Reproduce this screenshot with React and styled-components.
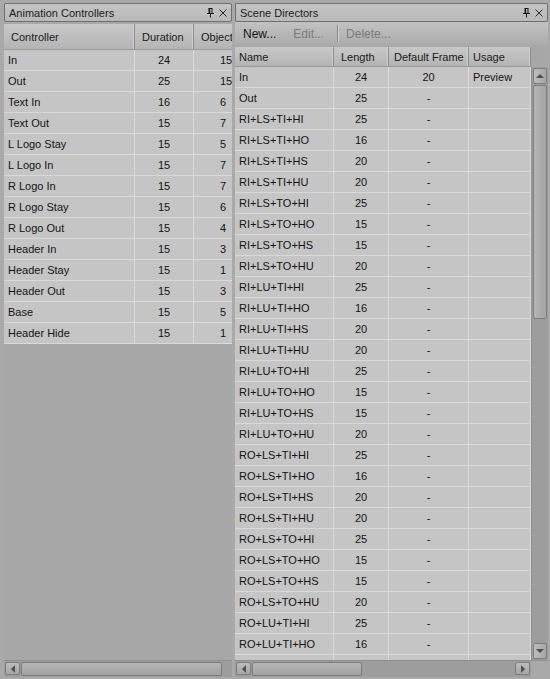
import React from 'react';
import styled, { createGlobalStyle } from 'styled-components';

const controllers = [
  ['In', 24, 15], ['Out', 25, 15], ['Text In', 16, 6], ['Text Out', 15, 7],
  ['L Logo Stay', 15, 5], ['L Logo In', 15, 7], ['R Logo In', 15, 7], ['R Logo Stay', 15, 6],
  ['R Logo Out', 15, 4], ['Header In', 15, 3], ['Header Stay', 15, 1], ['Header Out', 15, 3],
  ['Base', 15, 5], ['Header Hide', 15, 1],
];

const tiLengths = { HI: 25, HO: 16, HS: 20, HU: 20 };
const toLengths = { HI: 25, HO: 15, HS: 15, HU: 20 };

const directors = [['In', 24, '20', 'Preview'], ['Out', 25, '-', '']];
['RI', 'RO'].forEach((r) => {
  ['LS', 'LU'].forEach((l) => {
    ['TI', 'TO'].forEach((t) => {
      ['HI', 'HO', 'HS', 'HU'].forEach((h) => {
        const len = t === 'TI' ? tiLengths[h] : toLengths[h];
        directors.push([`${r}+${l}+${t}+${h}`, len, '-', '']);
      });
    });
  });
});

const GlobalStyle = createGlobalStyle`
  html, body { margin: 0; padding: 0; background: #a9a9a9; }
  body { font-family: "Liberation Sans", Arial, sans-serif; font-size: 11px; color: #151515; }
`;

const Screen = styled.div`
  width: 550px;
  height: 679px;
  box-sizing: border-box;
  padding: 3px 2px 2px 4px;
  display: flex;
  gap: 3px;
  overflow: hidden;
`;

const Panel = styled.div`
  width: ${(p) => p.$width}px;
  display: flex;
  flex-direction: column;
  min-height: 0;
`;

const TitleBar = styled.div`
  height: 17px;
  border: 1px solid #6f6f6f;
  border-radius: 2px;
  background: linear-gradient(#c4c4c4, #b9b9b9);
  display: flex;
  align-items: center;
  padding: 0 4px;
  color: #1c1c1c;
  flex-shrink: 0;
`;

const TitleText = styled.span`
  flex: 1;
`;

const TitleIcons = styled.div`
  display: flex;
  align-items: center;
  gap: 5px;
  color: #222;
`;

const Toolbar = styled.div`
  height: 23px;
  display: flex;
  align-items: center;
  background: linear-gradient(#c2c2c2, #acacac);
  padding: 0 7px;
  flex-shrink: 0;
`;

const ToolButton = styled.span`
  font-size: 12px;
  color: ${(p) => (p.$disabled ? '#7a7a7a' : '#151515')};
  padding: 0 ${(p) => p.$right ?? 8}px 0 ${(p) => p.$left ?? 8}px;
`;

const ToolSep = styled.span`
  width: 1px;
  height: 17px;
  background: #8a8a8a;
  box-shadow: 1px 0 0 #d0d0d0;
`;

const Body = styled.div`
  flex: 1;
  min-height: 0;
  display: flex;
  margin-top: 2px;
  background: #a7a7a7;
`;

const TableArea = styled.div`
  flex: 1;
  min-width: 0;
  overflow: hidden;
`;

const Grid = styled.div`
  display: grid;
  grid-template-columns: ${(p) => p.$cols};
  grid-template-rows: ${(p) => p.$head}px;
  grid-auto-rows: 21px;
`;

const HeadCell = styled.div`
  display: flex;
  align-items: center;
  padding-left: ${(p) => p.$pad}px;
  background: linear-gradient(#c8c8c8, #b4b4b4);
  border-right: 1px solid #8e8e8e;
  box-shadow: inset -1px 0 0 #cfcfcf;
  border-bottom: 1px solid #9a9a9a;
  white-space: nowrap;
  overflow: hidden;
  color: #1a1a1a;
`;

const Cell = styled.div`
  display: flex;
  align-items: center;
  justify-content: ${(p) => (p.$center ? 'center' : 'flex-start')};
  padding-left: ${(p) => p.$pad ?? (p.$center ? 0 : 4)}px;
  background: #c5c5c5;
  border-right: 1px solid #d9d9d9;
  border-bottom: 1px solid #d9d9d9;
  white-space: nowrap;
  overflow: hidden;
  color: #131313;
`;

const VScroll = styled.div`
  width: 16px;
  display: flex;
  flex-direction: column;
  margin-top: ${(p) => p.$top}px;
  background: #9d9d9d;
  border-left: 1px solid #8f8f8f;
  flex-shrink: 0;
`;

const HScroll = styled.div`
  height: 16px;
  display: flex;
  background: #9d9d9d;
  border-top: 1px solid #8f8f8f;
  flex-shrink: 0;
`;

const ArrowBtn = styled.div`
  width: ${(p) => (p.$v ? 14 : 15)}px;
  height: ${(p) => (p.$v ? 16 : 13)}px;
  margin: 1px;
  border: 1px solid #7c7c7c;
  border-radius: 2px;
  background: linear-gradient(${(p) => (p.$v ? '90deg, ' : '')}#bdbdbd, #a6a6a6);
  display: flex;
  align-items: center;
  justify-content: center;
  box-sizing: border-box;
  flex-shrink: 0;
`;

const Thumb = styled.div`
  border: 1px solid #7c7c7c;
  border-radius: 2px;
  box-sizing: border-box;
  background: linear-gradient(${(p) => (p.$v ? '90deg, ' : '')}#b6b6b6, #a2a2a2);
  ${(p) => (p.$v ? `height: ${p.$size}px; margin: 0 1px;` : `width: ${p.$size}px; margin: 1px 0;`)}
  flex-shrink: 0;
`;

const Track = styled.div`
  flex: 1;
`;

const Corner = styled.div`
  width: 17px;
  background: #a9a9a9;
`;

const Arrow = ({ dir }) => {
  const vertical = dir === 'up' || dir === 'down';
  const pts = {
    up: '1,6 5,2 9,6',
    down: '1,2 5,6 9,2',
    left: '6,1 2,5 6,9',
    right: '2,1 6,5 2,9',
  }[dir];
  const w = vertical ? 10 : 8;
  const h = vertical ? 8 : 10;
  return (
    <svg width={w} height={h} viewBox={`0 0 ${w} ${h}`}>
      <polygon points={pts} fill="#4e4e4e" />
    </svg>
  );
};

const PinIcon = () => (
  <svg width="7" height="10" viewBox="0 0 7 10">
    <path d="M1.5 0.5h4M2 0.5v5M5 0.5v5M0 5.5h7M3.5 5.5v4" stroke="#1a1a1a" strokeWidth="1" fill="none" />
    <rect x="2" y="1" width="1.2" height="4.5" fill="#1a1a1a" />
  </svg>
);

const CloseIcon = () => (
  <svg width="8" height="8" viewBox="0 0 8 8">
    <path d="M0.5 0.5l7 7M7.5 0.5l-7 7" stroke="#2a2a2a" strokeWidth="1" />
  </svg>
);

const Title = ({ children }) => (
  <TitleBar>
    <TitleText>{children}</TitleText>
    <TitleIcons>
      <PinIcon />
      <CloseIcon />
    </TitleIcons>
  </TitleBar>
);

export default function App() {
  return (
    <>
      <GlobalStyle />
      <Screen>
        <Panel $width={228}>
          <Title>Animation Controllers</Title>
          <Body>
            <TableArea>
              <Grid $cols="131px 59px 70px" $head={26}>
                <HeadCell $pad={7}>Controller</HeadCell>
                <HeadCell $pad={7}>Duration</HeadCell>
                <HeadCell $pad={7}>Objects</HeadCell>
                {controllers.map(([n, d, o]) => (
                  <React.Fragment key={n}>
                    <Cell>{n}</Cell>
                    <Cell $center>{d}</Cell>
                    <Cell $pad={26}>{o}</Cell>
                  </React.Fragment>
                ))}
              </Grid>
            </TableArea>
          </Body>
          <HScroll>
            <ArrowBtn><Arrow dir="left" /></ArrowBtn>
            <Thumb $size={201} />
            <Track />
          </HScroll>
        </Panel>

        <Panel $width={314}>
          <Title>Scene Directors</Title>
          <Toolbar>
            <ToolButton $left={1}>New...</ToolButton>
            <ToolButton $disabled $left={9} $right={13}>Edit...</ToolButton>
            <ToolSep />
            <ToolButton $disabled>Delete...</ToolButton>
          </Toolbar>
          <Body>
            <TableArea>
              <Grid $cols="99px 55px 80px 62px" $head={20}>
                <HeadCell $pad={4}>Name</HeadCell>
                <HeadCell $pad={7}>Length</HeadCell>
                <HeadCell $pad={5}>Default Frame</HeadCell>
                <HeadCell $pad={4}>Usage</HeadCell>
                {directors.map(([n, l, f, u]) => (
                  <React.Fragment key={n}>
                    <Cell>{n}</Cell>
                    <Cell $center>{l}</Cell>
                    <Cell $center>{f}</Cell>
                    <Cell>{u}</Cell>
                  </React.Fragment>
                ))}
              </Grid>
            </TableArea>
            <VScroll $top={20}>
              <ArrowBtn $v><Arrow dir="up" /></ArrowBtn>
              <Thumb $v $size={234} />
              <Track />
              <ArrowBtn $v><Arrow dir="down" /></ArrowBtn>
            </VScroll>
          </Body>
          <HScroll>
            <ArrowBtn><Arrow dir="left" /></ArrowBtn>
            <Thumb $size={110} />
            <Track />
            <ArrowBtn><Arrow dir="right" /></ArrowBtn>
            <Corner />
          </HScroll>
        </Panel>
      </Screen>
    </>
  );
}
